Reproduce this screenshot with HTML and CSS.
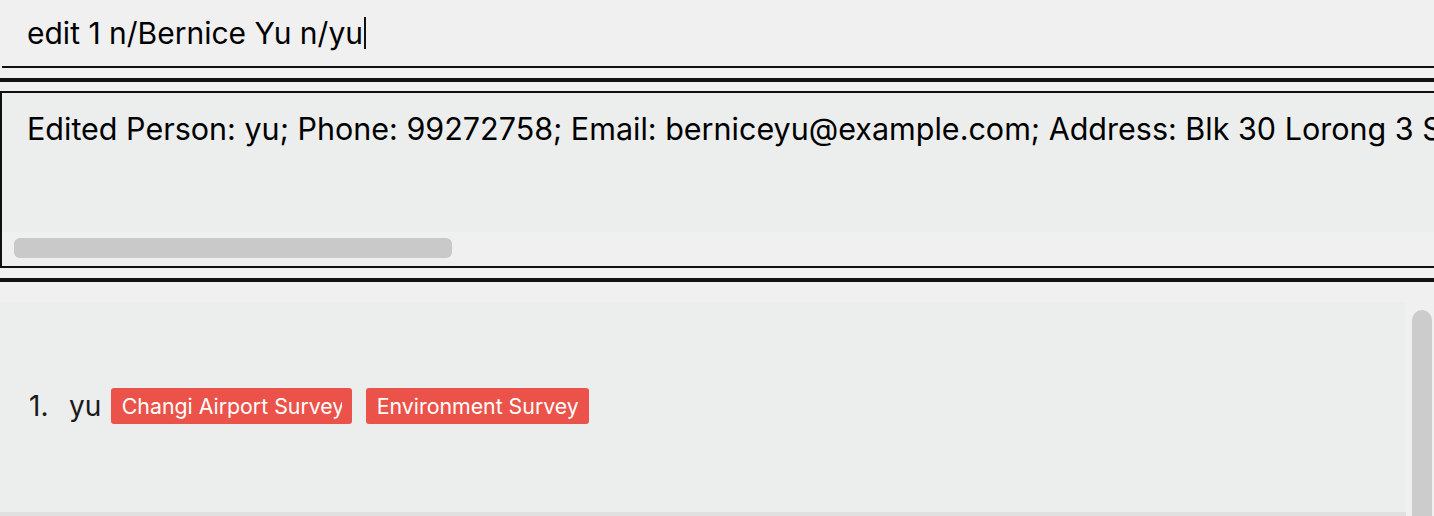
FILE: index.html
```html
<!DOCTYPE html>
<html>
<head>
<meta charset="utf-8">
<link rel="stylesheet" href="styles.css">
</head>
<body>
<div class="app">
  <div class="command">
    <div class="command-inner">
      <span class="command-text">edit 1 n/Bernice Yu n/yu</span><span class="caret"></span>
    </div>
  </div>
  <div class="sep"></div>
  <div class="result">
    <div class="result-text">Edited Person: yu; Phone: 99272758; Email: berniceyu@example.com; Address: Blk 30 Lorong 3 Serangoon Gardens, #07-18; Tags: [Changi Airport Survey][Environment Survey]</div>
    <div class="hscroll"><div class="hthumb"></div></div>
  </div>
  <div class="sep sep-2"></div>
  <div class="list">
    <div class="list-items">
      <div class="card">
        <span class="index">1.</span>
        <span class="name">yu</span>
        <div class="tags">
          <span class="tag"><span class="tag-clip">Changi Airport Survey</span></span>
          <span class="tag">Environment Survey</span>
        </div>
      </div>
      <div class="card-next"></div>
    </div>
    <div class="vscroll"><div class="vthumb"></div></div>
  </div>
</div>
</body>
</html>
```
FILE: styles.css
```css
html, body {
  margin: 0;
  padding: 0;
}
body {
  background: #f0f0f0;
  width: 1434px;
  height: 516px;
  overflow: hidden;
  font-family: Inter, "Liberation Sans", sans-serif;
  color: #000;
}
.app {
  display: flex;
  flex-direction: column;
}
.command {
  height: 68px;
  padding-left: 2px;
  flex-shrink: 0;
}
.command-inner {
  height: 66px;
  border-bottom: 2px solid #111;
  display: flex;
  align-items: center;
  padding-left: 25px;
}
.command-text {
  font-size: 30px;
}
.caret {
  display: inline-block;
  width: 2px;
  height: 32px;
  background: #111;
  margin-left: 1px;
}
.sep {
  margin-top: 10px;
  height: 4px;
  background: #111;
  flex-shrink: 0;
}
.result {
  margin-top: 9px;
  width: 1440px;
  height: 173px;
  border: 2px solid #111;
  display: flex;
  flex-direction: column;
  background: #f0f0f0;
  flex-shrink: 0;
}
.result-text {
  height: 139px;
  flex-shrink: 0;
  background: #eceeed;
  padding: 17px 0 0 25px;
  box-sizing: border-box;
  font-size: 30.5px;
  white-space: nowrap;
  overflow: hidden;
}
.hscroll {
  flex: 1;
  padding: 6px 0 0 12px;
}
.hthumb {
  width: 438px;
  height: 20px;
  border-radius: 6px;
  background: #c9c9c9;
}
.sep-2 {
  margin-top: 10px;
}
.list {
  display: flex;
  padding-top: 20px;
  height: 234px;
  box-sizing: border-box;
  flex-shrink: 0;
}
.list-items {
  width: 1406px;
  display: flex;
  flex-direction: column;
}
.card {
  height: 210px;
  flex-shrink: 0;
  background: #eceeed;
  display: flex;
  align-items: center;
  padding: 0 0 2px 29px;
  box-sizing: border-box;
}
.card-next {
  height: 10px;
  flex-shrink: 0;
  background: #e0e0e0;
}
.index {
  font-size: 28px;
  color: #1a1a1a;
  width: 40px;
}
.name {
  font-size: 28px;
  color: #1a1a1a;
  margin-right: 10px;
}
.tags {
  display: flex;
  gap: 14px;
}
.tag {
  display: flex;
  background: #eb534a;
  color: #fff;
  font-size: 21.3px;
  height: 36px;
  line-height: 36px;
  padding: 0 10.5px;
  box-sizing: border-box;
  border-radius: 3px;
  white-space: nowrap;
}
.tag-clip {
  display: block;
  width: 220px;
  overflow: hidden;
}
.vscroll {
  margin-left: 6px;
  padding-top: 8px;
}
.vthumb {
  width: 20px;
  height: 300px;
  background: #cccccc;
  border-radius: 10px 10px 0 0;
}
```
